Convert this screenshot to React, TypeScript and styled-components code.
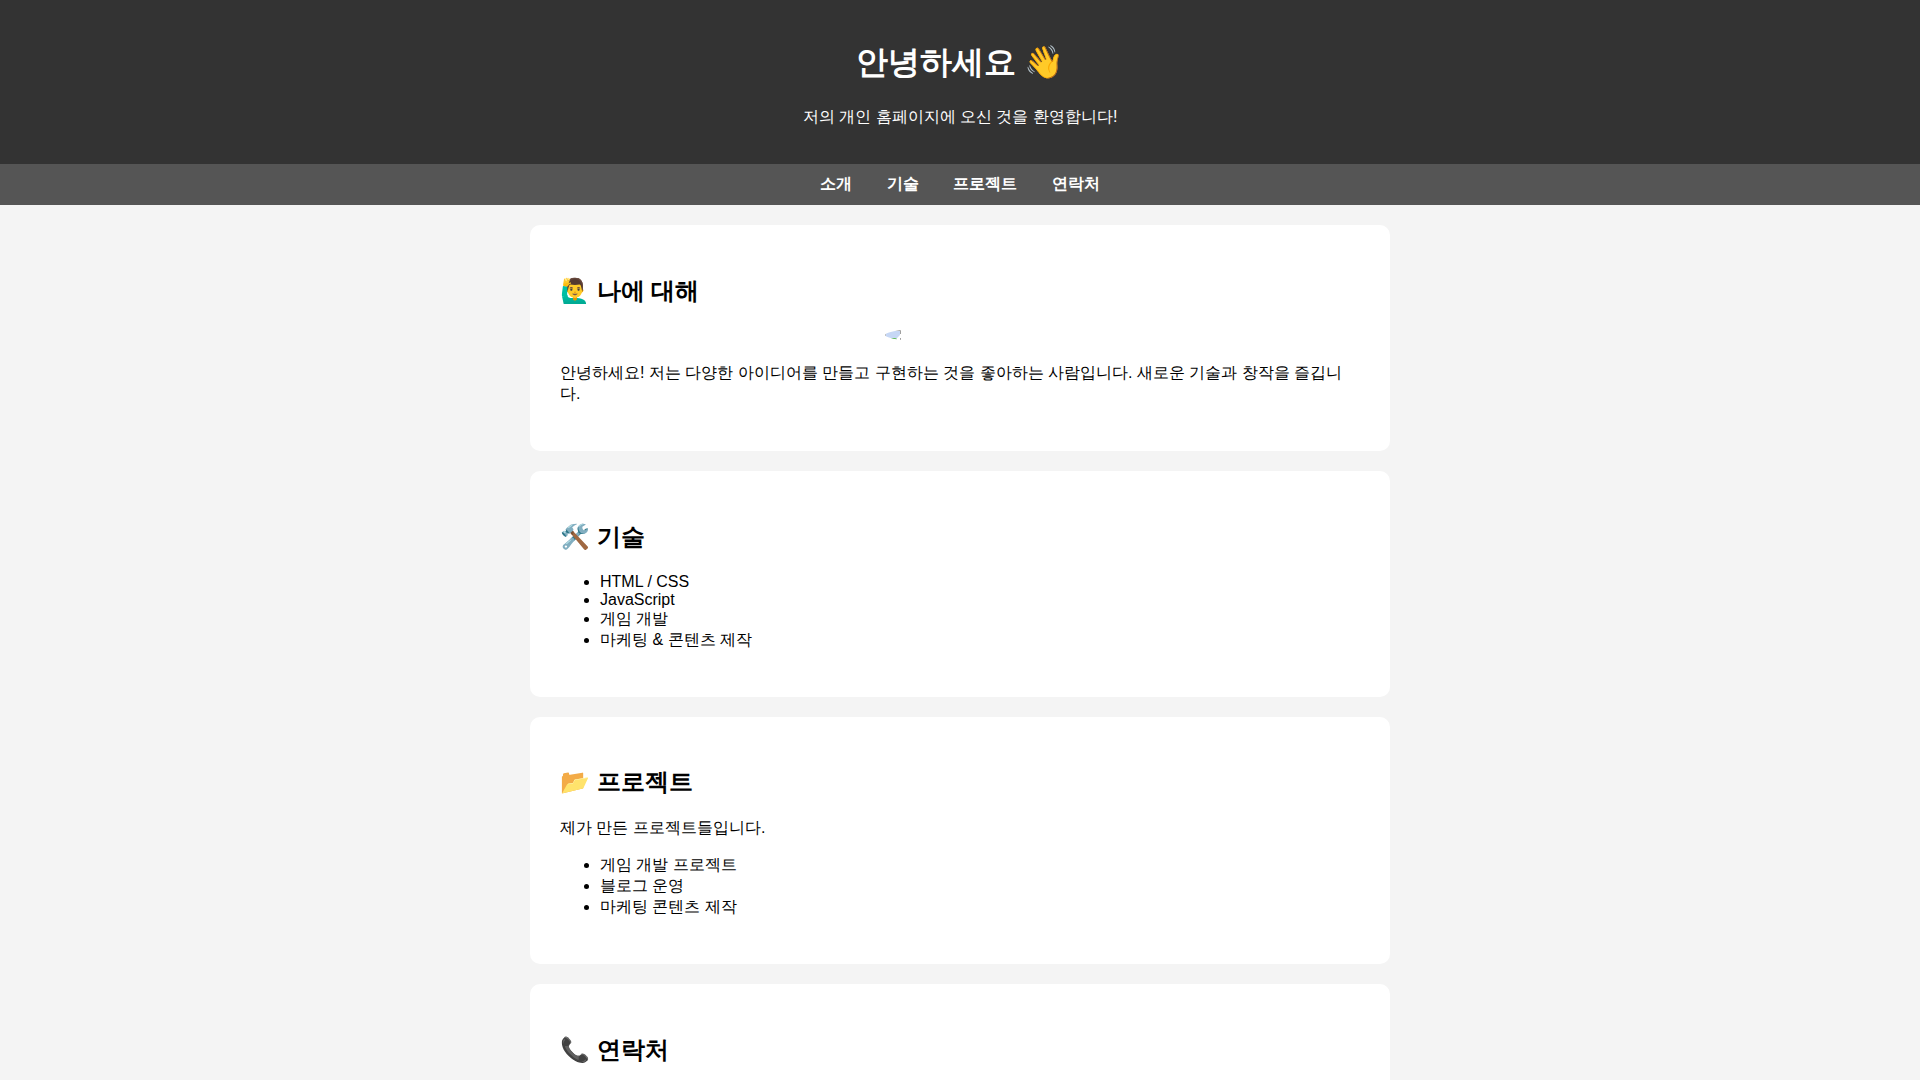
import React from "react";
import styled, { createGlobalStyle } from "styled-components";

const GlobalStyle = createGlobalStyle`
  body {
    margin: 0;
    background: #f4f4f4;
    color: #000;
    font-family: "Liberation Sans", Arial, sans-serif;
    font-size: 16px;
  }
`;

const Header = styled.header`
  padding: 20px;
  background: #333;
  color: #fff;
  text-align: center;
`;

const Nav = styled.nav`
  padding: 10px;
  background: #555;
  text-align: center;
`;

const NavLink = styled.a`
  margin: 0 15px;
  color: #fff;
  font-weight: bold;
  text-decoration: none;
`;

const Card = styled.section`
  max-width: 800px;
  margin: 20px auto;
  padding: 30px;
  border-radius: 10px;
  background: #fff;
`;

const Portrait = styled.div`
  width: 150px;
  height: 16px;
  margin: 0 auto 20px;
  border-radius: 50%;
  overflow: hidden;
`;

const PortraitIcon = styled.svg`
  display: block;
`;

const links = [
  { href: "#about", label: "소개" },
  { href: "#skills", label: "기술" },
  { href: "#projects", label: "프로젝트" },
  { href: "#contact", label: "연락처" },
];

const skills = ["HTML / CSS", "JavaScript", "게임 개발", "마케팅 & 콘텐츠 제작"];
const projects = ["게임 개발 프로젝트", "블로그 운영", "마케팅 콘텐츠 제작"];

function BulletList({ items }: { items: string[] }) {
  return (
    <ul>
      {items.map((item) => (
        <li key={item}>{item}</li>
      ))}
    </ul>
  );
}

export default function App() {
  return (
    <>
      <GlobalStyle />
      <Header>
        <h1>안녕하세요 👋</h1>
        <p>저의 개인 홈페이지에 오신 것을 환영합니다!</p>
      </Header>
      <Nav>
        {links.map((link) => (
          <React.Fragment key={link.href}>
            <NavLink href={link.href}>{link.label}</NavLink>{" "}
          </React.Fragment>
        ))}
      </Nav>
      <Card id="about">
        <h2>🙋‍♂️ 나에 대해</h2>
        <Portrait>
          <PortraitIcon width="16" height="16" viewBox="0 0 16 16" aria-hidden="true">
            <path d="M1 1h9v3h5v4l-5 5H1z" fill="#c6d7f5" />
            <path d="M4 13c1-2 3-2 4-2s3 0 4 1l-1 1z" fill="#45b02f" />
            <path d="M.5 5v6" fill="none" stroke="#b0b0b0" />
            <path d="M10 3.5h5.5V7" fill="none" stroke="#a0a0a0" />
            <path d="M15.5 11v3" fill="none" stroke="#a0a0a0" />
          </PortraitIcon>
        </Portrait>
        <p>
          안녕하세요! 저는 다양한 아이디어를 만들고 구현하는 것을 좋아하는 사람입니다. 새로운 기술과
          창작을 즐깁니다.
        </p>
      </Card>
      <Card id="skills">
        <h2>🛠️ 기술</h2>
        <BulletList items={skills} />
      </Card>
      <Card id="projects">
        <h2>📂 프로젝트</h2>
        <p>제가 만든 프로젝트들입니다.</p>
        <BulletList items={projects} />
      </Card>
      <Card id="contact">
        <h2>📞 연락처</h2>
      </Card>
    </>
  );
}
